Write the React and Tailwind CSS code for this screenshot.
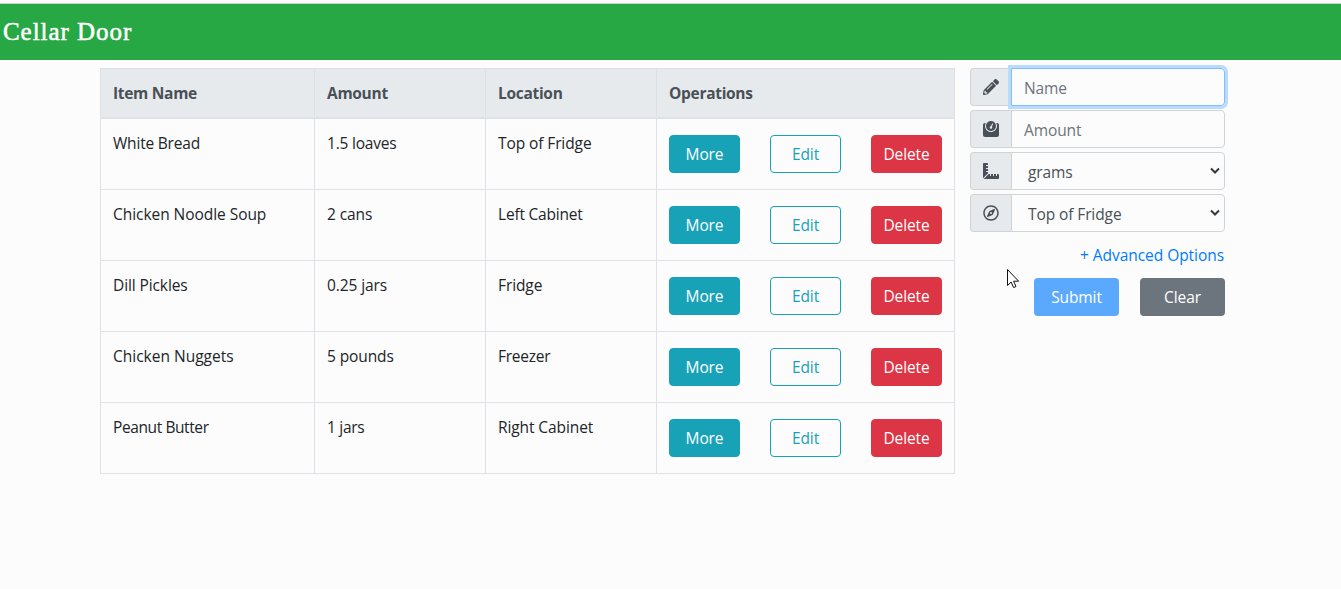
import React from "react";
import { FaPencilAlt, FaWeight, FaRulerCombined, FaRegCompass } from "react-icons/fa";

const items = [
  ["White Bread", "1.5 loaves", "Top of Fridge"],
  ["Chicken Noodle Soup", "2 cans", "Left Cabinet"],
  ["Dill Pickles", "0.25 jars", "Fridge"],
  ["Chicken Nuggets", "5 pounds", "Freezer"],
  ["Peanut Butter", "1 jars", "Right Cabinet"],
];

const spacing = {
  "White Bread": "tracking-[-0.2px]",
  "Chicken Noodle Soup": "tracking-[-0.05px]",
  "Chicken Nuggets": "tracking-[0px]",
  "Peanut Butter": "tracking-[-0.4px]",
  "1.5 loaves": "tracking-[-0.2px]",
  "1 jars": "tracking-[-0.3px]",
  "Left Cabinet": "tracking-[-0.2px]",
  Freezer: "tracking-[-0.25px]",
};

const button = "h-[38px] w-[71px] rounded border text-center";

function Header() {
  return (
    <header className="mt-[3px] flex h-[57px] items-center border-t border-[#c5d3c8] bg-[#28a745] pl-[3px]">
      <h1 className="pb-px font-['Liberation_Serif',serif] text-[25px] font-normal tracking-[0.95px] text-white [-webkit-text-stroke:0.5px_white]">
        Cellar Door
      </h1>
    </header>
  );
}

function ItemTable() {
  return (
    <table className="w-[855px] shrink-0 table-fixed border-separate border-spacing-0 self-start border-t border-l border-[#dee2e6] text-left">
      <colgroup>
        <col className="w-[214px]" />
        <col className="w-[171px]" />
        <col className="w-[171px]" />
        <col className="w-[298px]" />
      </colgroup>
      <thead className="bg-[#e7eaed] text-[#495057]">
        <tr>
          {["Item Name", "Amount", "Location", "Operations"].map((h) => (
            <th key={h} className="h-[50px] border-r border-b-2 border-[#dee2e6] px-3 py-0 font-bold tracking-[-0.3px]">
              {h}
            </th>
          ))}
        </tr>
      </thead>
      <tbody>
        {items.map((row) => (
          <tr key={row[0]}>
            {row.map((value) => (
              <td
                key={value}
                className={`h-[71px] border-r border-b border-[#dee2e6] px-3 pt-3 pb-0 align-top ${spacing[value] || ""}`}
              >
                {value}
              </td>
            ))}
            <td className="h-[71px] border-r border-b border-[#dee2e6] px-3 py-0">
              <div className="flex justify-between">
                <button className={`${button} border-[#17a2b8] bg-[#17a2b8] text-white`}>More</button>
                <button className={`${button} border-[#17a2b8] text-[#17a2b8]`}>Edit</button>
                <button className={`${button} border-[#dc3545] bg-[#dc3545] text-white`}>Delete</button>
              </div>
            </td>
          </tr>
        ))}
      </tbody>
    </table>
  );
}

function Addon({ children }) {
  return (
    <span className="flex w-[41px] items-center justify-center rounded-l border border-r-0 border-[#ced4da] bg-[#e7eaed] text-base text-[#495057]">
      {children}
    </span>
  );
}

function Select({ icon, value }) {
  return (
    <div className="flex h-[38px]">
      <Addon>{icon}</Addon>
      <div className="flex flex-1 items-center justify-between rounded-r border border-[#ced4da] pr-1 pl-4 text-[#495057]">
        <span className="pt-0.5">{value}</span>
        <svg width="10" height="8" viewBox="0 0 10 8" fill="none" stroke="#343a40" strokeWidth="2">
          <path d="M1 1.5l4 4 4-4" />
        </svg>
      </div>
    </div>
  );
}

function ItemForm() {
  return (
    <form className="flex w-[255px] flex-col gap-1">
      <div className="flex h-[38px]">
        <Addon><FaPencilAlt /></Addon>
        <input
          placeholder="Name"
          className="min-w-0 flex-1 rounded-r border border-[#80bdff] px-3 pt-0.5 ring-3 ring-[#b9dbfd] outline-none placeholder:text-[#6c757d]"
        />
      </div>
      <div className="flex h-[38px]">
        <Addon><FaWeight /></Addon>
        <input
          placeholder="Amount"
          className="min-w-0 flex-1 rounded-r border border-[#ced4da] px-3 pt-0.5 outline-none placeholder:text-[#6c757d]"
        />
      </div>
      <Select icon={<FaRulerCombined />} value="grams" />
      <Select icon={<FaRegCompass />} value="Top of Fridge" />
      <a className="mt-[7px] mr-px self-end tracking-[-0.05px] text-[#007bff]">+ Advanced Options</a>
      <div className="mt-[7px] flex justify-end gap-[21px]">
        <button type="button" className="h-[38px] w-[85px] rounded bg-[#5aa9ff] text-white">Submit</button>
        <button type="button" className="h-[38px] w-[85px] rounded bg-[#6c757d] text-white">Clear</button>
      </div>
    </form>
  );
}

function Cursor() {
  return (
    <svg className="absolute top-[268px] left-[1006px]" width="14" height="21" viewBox="0 0 14 21">
      <path d="M1.5 1.5v16l3.6-3.5 2.5 5.5 2.4-1-2.4-5.3h5z" fill="#fff" stroke="#111" />
    </svg>
  );
}

export default function App() {
  return (
    <div className="relative flow-root h-[589px] overflow-hidden bg-[#fcfcfc] font-['Open_Sans','Noto_Sans',sans-serif] text-[15.5px] leading-6 tracking-[-0.1px] text-[#212529]">
      <Header />
      <main className="flex gap-[15px] pt-2 pl-[100px]">
        <ItemTable />
        <ItemForm />
      </main>
      <Cursor />
    </div>
  );
}
